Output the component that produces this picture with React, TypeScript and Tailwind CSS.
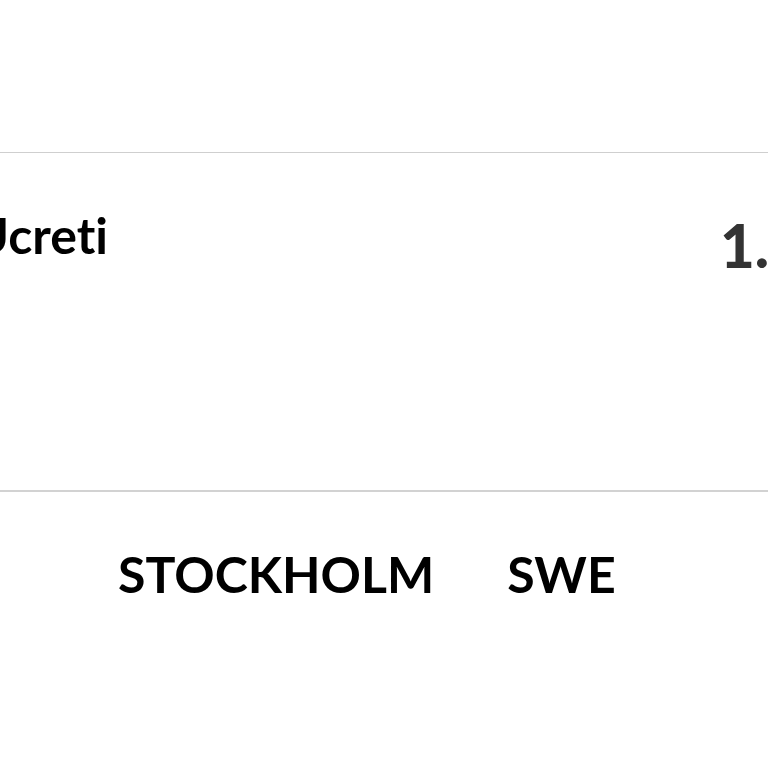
export default function App() {
  return (
    <div className="w-[768px] h-[768px] bg-white overflow-hidden font-['Lato',sans-serif] text-black [font-variant-ligatures:none]">
      <div className="h-[152px]" />

      {/* Row */}
      <div className="h-[338px] border-t border-[#cfcfcf] flex justify-between items-start pt-[57px]">
        <span className="-ml-[28px] text-[50px] font-bold leading-none">Ucreti</span>
        <span className="-mr-[1px] text-[60px] font-black leading-none text-[#333] mt-[5px]">1.</span>
      </div>

      {/* Location */}
      <div className="border-t-2 border-[#d2d2d2] flex items-start gap-[73px] pl-[118px] pt-[57px]">
        <span className="text-[50px] font-bold leading-none">STOCKHOLM</span>
        <span className="text-[50px] font-bold leading-none">SWE</span>
      </div>
    </div>
  )
}
